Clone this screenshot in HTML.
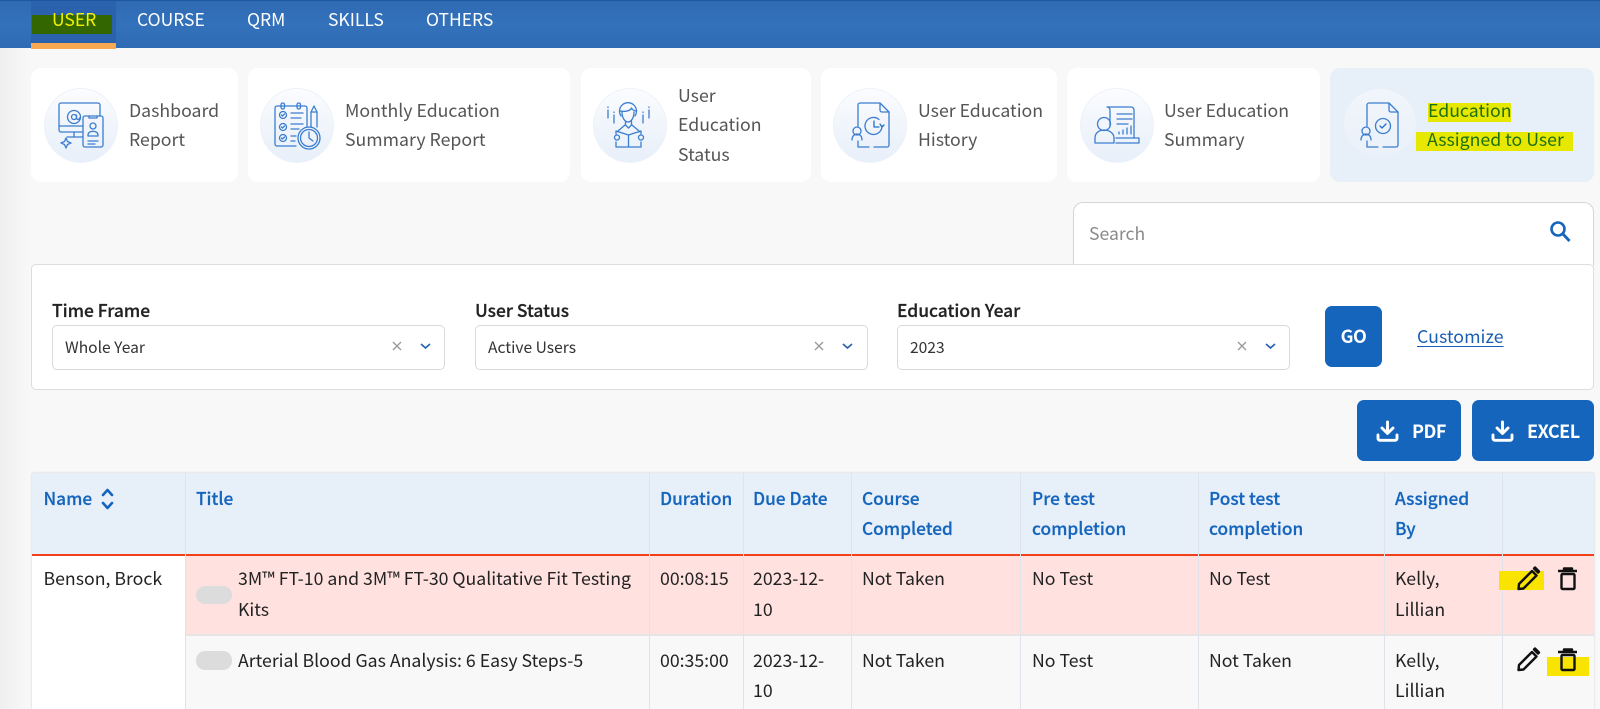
<!DOCTYPE html>
<html lang="en"><head><meta charset="utf-8"><title>Education Assigned to User</title>
<style>
*{box-sizing:border-box}
html,body{margin:0;padding:0;width:1600px;height:709px;overflow:hidden}
body{background:#f8f8f8;font-family:"Noto Sans CJK JP","Liberation Sans",sans-serif;color:#222;position:relative;font-size:17px}
.a{position:absolute}
.t{position:absolute;white-space:nowrap;line-height:30px;height:30px}
.hdr{left:0;top:0;width:1600px;height:48px;background:linear-gradient(#2f6ab3,#3372bb 50%,#2f6ab5);border-top:1px solid #1d579f}
.nav{color:#fff;font-size:17.5px;top:5px}
.card{top:68px;height:114px;background:#fff;border-radius:10px}
.circ{top:88px;width:74px;height:75px;border-radius:50%;background:linear-gradient(#fbfcfe,#e7eff9);border:1px solid #edf2f9}
.ct{color:#555;font-size:17.7px}
.lab{font-size:17.4px;font-weight:500;color:#222;-webkit-text-stroke:.25px #222}
.sel{top:325px;height:45px;background:#fff;border:1px solid #d9d9d9;border-radius:5px}
.st{top:332px;font-size:15.6px;color:#333}
.btn{background:#1565bd;border-radius:7px}
.bt{color:#fff;font-weight:700;font-size:18px;letter-spacing:-.5px}
.th{color:#1565bd;font-size:17.3px;font-weight:500;-webkit-text-stroke:.2px #1565bd}
.td{color:#222;font-size:17.7px}
.v{width:1px;background:#dfe4ea}
</style></head><body>
<div class="a" style="left:0;top:48px;width:30px;height:661px;background:linear-gradient(90deg,#efefef,#f8f8f8)"></div>

<div class="a hdr"></div>
<div class="a" style="left:31px;top:1px;width:85px;height:47px;background:#2a62ad"></div>
<div class="a" style="left:32px;top:15px;width:80px;height:19px;background:#336600"></div>
<div class="a" style="left:31px;top:43px;width:85px;height:6px;background:#f9a94f"></div>
<div class="t nav" style="left:52px;color:#f2f200">USER</div>
<div class="t nav" style="left:137px">COURSE</div>
<div class="t nav" style="left:247px">QRM</div>
<div class="t nav" style="left:328px">SKILLS</div>
<div class="t nav" style="left:426px">OTHERS</div>

<div class="a card" style="left:31px;width:207px"></div>
<div class="a card" style="left:248px;width:322px"></div>
<div class="a card" style="left:581px;width:230px"></div>
<div class="a card" style="left:821px;width:236px"></div>
<div class="a card" style="left:1067px;width:253px"></div>
<div class="a card" style="left:1330px;width:264px;background:#e7eff9"></div>
<div class="a circ" style="left:44px"></div>
<div class="a circ" style="left:260px"></div>
<div class="a circ" style="left:593px"></div>
<div class="a circ" style="left:833px"></div>
<div class="a circ" style="left:1080px"></div>
<div class="a circ" style="left:1344px;top:89px;width:72px;height:68px;background:linear-gradient(#f1f5fb,#eaf1fa);border:0"></div>

<div class="t ct" style="left:129px;top:95px">Dashboard</div>
<div class="t ct" style="left:129px;top:124px">Report</div>
<div class="t ct" style="left:345px;top:95px">Monthly Education</div>
<div class="t ct" style="left:345px;top:124px">Summary Report</div>
<div class="t ct" style="left:678px;top:80px">User</div>
<div class="t ct" style="left:678px;top:109px">Education</div>
<div class="t ct" style="left:678px;top:139px">Status</div>
<div class="t ct" style="left:918px;top:95px">User Education</div>
<div class="t ct" style="left:918px;top:124px">History</div>
<div class="t ct" style="left:1164px;top:95px">User Education</div>
<div class="t ct" style="left:1164px;top:124px">Summary</div>
<div class="a" style="left:1428px;top:103px;width:83px;height:19px;background:#e6e800"></div>
<div class="a" style="left:1416px;top:132px;width:157px;height:19px;background:#e6e800"></div>
<div class="t ct" style="left:1428px;top:95px;color:#1f6f10">Education</div>
<div class="t ct" style="left:1427px;top:124px;color:#1f6f10">Assigned to User</div>

<div class="a" style="left:1073px;top:202px;width:521px;height:64px;background:#fff;border:1px solid #d5d5d5;border-bottom:0;border-radius:10px 10px 0 0"></div>
<div class="t" style="left:1089px;top:219px;font-size:17.6px;color:#8a8a8a">Search</div>

<div class="a" style="left:31px;top:264px;width:1563px;height:126px;background:#fff;border:1px solid #ddd;border-radius:5px"></div>
<div class="t lab" style="left:52px;top:296px">Time Frame</div>
<div class="t lab" style="left:475px;top:296px">User Status</div>
<div class="t lab" style="left:897px;top:296px">Education Year</div>
<div class="a sel" style="left:52px;width:393px"></div>
<div class="a sel" style="left:475px;width:393px"></div>
<div class="a sel" style="left:897px;width:393px"></div>
<div class="t st" style="left:65px">Whole Year</div>
<div class="t st" style="left:488px">Active Users</div>
<div class="t st" style="left:910px">2023</div>

<div class="a btn" style="left:1325px;top:306px;width:57px;height:61px"></div>
<div class="t bt" style="left:1325px;top:321px;width:57px;text-align:center">GO</div>
<div class="t" style="left:1417px;top:321px;font-size:17.8px;color:#1a5fb4;text-decoration:underline;text-underline-offset:3px">Customize</div>

<div class="a btn" style="left:1357px;top:400px;width:104px;height:61px"></div>
<div class="a btn" style="left:1472px;top:400px;width:122px;height:61px"></div>
<div class="t bt" style="left:1412px;top:416px">PDF</div>
<div class="t bt" style="left:1527px;top:416px">EXCEL</div>

<div class="a" style="left:32px;top:473px;width:1562px;height:236px;background:#fff;box-shadow:0 0 2px #ccc"></div>
<div class="a" style="left:32px;top:473px;width:1562px;height:81px;background:#e7eff9"></div>
<div class="a" style="left:185px;top:555px;width:1409px;height:80px;background:#ffe2df"></div>
<div class="a" style="left:185px;top:635px;width:1409px;height:74px;background:#f8f8f8"></div>
<div class="a" style="left:185px;top:634px;width:1409px;height:2px;background:#e6e4e4"></div>
<div class="a" style="left:32px;top:554px;width:1562px;height:2px;background:#f2401a"></div>
<div class="a v" style="left:185px;top:473px;height:236px"></div>
<div class="a v" style="left:649px;top:473px;height:236px"></div>
<div class="a v" style="left:743px;top:473px;height:236px"></div>
<div class="a v" style="left:851px;top:473px;height:236px"></div>
<div class="a v" style="left:1020px;top:473px;height:236px"></div>
<div class="a v" style="left:1198px;top:473px;height:236px"></div>
<div class="a v" style="left:1384px;top:473px;height:236px"></div>
<div class="a v" style="left:1502px;top:473px;height:236px"></div>

<div class="t th" style="left:43.500px;top:483px">Name</div>
<div class="t th" style="left:196px;top:483px">Title</div>
<div class="t th" style="left:660px;top:483px">Duration</div>
<div class="t th" style="left:753px;top:483px">Due Date</div>
<div class="t th" style="left:862px;top:483px">Course</div>
<div class="t th" style="left:862px;top:513px">Completed</div>
<div class="t th" style="left:1032px;top:483px">Pre test</div>
<div class="t th" style="left:1032px;top:513px">completion</div>
<div class="t th" style="left:1209px;top:483px">Post test</div>
<div class="t th" style="left:1209px;top:513px">completion</div>
<div class="t th" style="left:1395px;top:483px">Assigned</div>
<div class="t th" style="left:1395px;top:513px">By</div>

<div class="t td" style="left:43.500px;top:563px">Benson, Brock</div>
<div class="a" style="left:196px;top:586px;width:36px;height:18px;border-radius:9px;background:#dcdcdc"></div>
<div class="a" style="left:196px;top:651px;width:36px;height:19px;border-radius:9px;background:#dcdcdc"></div>
<div class="t td" style="left:238px;top:563px">3M™ FT-10 and 3M™ FT-30 Qualitative Fit Testing</div>
<div class="t td" style="left:238px;top:594px">Kits</div>
<div class="t td" style="left:660px;top:563px">00:08:15</div>
<div class="t td" style="left:753px;top:563px">2023-12-</div>
<div class="t td" style="left:753px;top:594px">10</div>
<div class="t td" style="left:862px;top:563px">Not Taken</div>
<div class="t td" style="left:1032px;top:563px">No Test</div>
<div class="t td" style="left:1209px;top:563px">No Test</div>
<div class="t td" style="left:1395px;top:563px">Kelly,</div>
<div class="t td" style="left:1395px;top:594px">Lillian</div>
<div class="t td" style="left:238px;top:645px">Arterial Blood Gas Analysis: 6 Easy Steps-5</div>
<div class="t td" style="left:660px;top:645px">00:35:00</div>
<div class="t td" style="left:753px;top:645px">2023-12-</div>
<div class="t td" style="left:753px;top:675px">10</div>
<div class="t td" style="left:862px;top:645px">Not Taken</div>
<div class="t td" style="left:1032px;top:645px">No Test</div>
<div class="t td" style="left:1209px;top:645px">Not Taken</div>
<div class="t td" style="left:1395px;top:645px">Kelly,</div>
<div class="t td" style="left:1395px;top:675px">Lillian</div>

<div class="a" style="left:1499px;top:571px;width:45px;height:19px;background:#f9e400"></div>
<div class="a" style="left:1547px;top:657px;width:42px;height:19px;background:#f9e400"></div>

<svg class="a" style="left:0;top:0" width="1600" height="709" viewBox="0 0 1600 709" fill="none">
<g stroke="#3b7dd0" stroke-width="1.300" stroke-linecap="round" stroke-linejoin="round">
<!-- dashboard -->
<path d="M83 132H61a2 2 0 0 1-2-2V105a2 2 0 0 1 2-2h37a2 2 0 0 1 2 2v11"/>
<path d="M59 126h24M74 132v5M67 137h16"/>
<circle cx="74" cy="117" r="6.500"/><circle cx="74" cy="117" r="2.500"/><path d="M76.500 115v3a1.500 1.500 0 0 0 3 0"/>
<rect x="83" y="116" width="20" height="31" rx="2"/>
<path d="M89 116v2h8v-2M88 141h10M88 144h7"/>
<circle cx="93" cy="126" r="3"/><path d="M88 136v-1c0-5 10-5 10 0v1z"/>
<path d="M66 138l1.500 3.500L71 143l-3.500 1.500L66 148l-1.500-3.500L61 143l3.500-1.500z"/>
<!-- monthly -->
<path d="M296 146h-19a2 2 0 0 1-2-2V108a2 2 0 0 1 2-2h28a2 2 0 0 1 2 2v18"/>
<rect x="281" y="103" width="3.500" height="6" rx="1.700"/><rect x="297" y="103" width="3.500" height="6" rx="1.700"/>
<circle cx="283" cy="115" r="3.500"/><circle cx="283" cy="127" r="3.500"/><circle cx="283" cy="138" r="3.500"/>
<path d="M281.500 115l1 1 2-2M281.500 127l1 1 2-2M281.500 138l1 1 2-2M291 113h12M291 118h10M291 124h12M291 129h8M291 136h5M291 141h4"/>
<path d="M311 127v-15l3-6 3 6v15M311 112h6"/>
<circle cx="309" cy="138" r="11"/><circle cx="309" cy="138" r="8.500"/><path d="M309 132v6l4 3"/>
<!-- status -->
<path d="M621 116a8.500 8.500 0 1 1 14 0"/><path d="M620.500 111c4 1 10 0 11-3 1 2 3 3 5 3"/>
<path d="M622 112c0 6 3 10 6 10s6-4 6-10M625.500 121v4l3 3 3-3v-4"/>
<path d="M618 132v-1l7-6M639 132v-1l-7-6"/>
<path d="M616 131l12.500 4 12.500-4M628.500 135v12M616 142v5l12.500 0 12.500 0v-5M616 131v3M641 131v3"/>
<circle cx="617" cy="137.500" r="2.500"/><circle cx="641" cy="137.500" r="2.500"/>
<path d="M608 110v8M614 115v8M643 115v8M649 110v8M608 107v.5M614 112v.5M643 112v.5M649 107v.5"/>
<!-- history -->
<path d="M858 126V105a2 2 0 0 1 2-2h20l9 9v33a2 2 0 0 1-2 2h-13M869 147h-11v-6M880 103v7a2 2 0 0 0 2 2h7"/>
<path d="M882 126a8.500 8.500 0 1 1-3-6.500"/><path d="M874 121v6h5M880 124l2 3 2-2" stroke="#2470c8"/>
<circle cx="857" cy="131" r="4"/><path d="M852 140c0-8 10-8 10 0"/>
<!-- summary -->
<path d="M1110 126v-16a3 3 0 0 0-3-3h24a3 3 0 0 1 3 3v28M1107 107a3 3 0 0 1 3 3M1116 143h23v-5h-23"/>
<path d="M1117 114h15M1117 119h15M1117 124h11M1119 134v-2M1123 134v-4M1127 134v-6M1131 134v-8"/>
<circle cx="1104" cy="124" r="6.500"/><path d="M1095 143v-5c0-5 4-8 9-8s10 3 10 8v5z"/>
<!-- assigned -->
<path d="M1367 126V105a2 2 0 0 1 2-2h20l9 9v33a2 2 0 0 1-2 2h-13M1378 147h-11v-6M1389 103v7a2 2 0 0 0 2 2h7"/>
<circle cx="1383" cy="126" r="7.500"/><path d="M1380 126l2 2 4-4" stroke="#2470c8"/>
<circle cx="1366" cy="131" r="4"/><path d="M1361 140c0-8 10-8 10 0"/>
</g>
<!-- search -->
<circle cx="1558" cy="229" r="6.500" stroke="#1565bd" stroke-width="2.600"/><path d="M1563 234l6.500 7" stroke="#1565bd" stroke-width="2.800"/>
<!-- select icons -->
<g stroke="#999" stroke-width="1.300"><path d="M393 342l8 8M401 342l-8 8M815 342l8 8M823 342l-8 8M1238 342l8 8M1246 342l-8 8"/></g>
<g stroke="#2a64b0" stroke-width="1.700"><path d="M421 344l4.500 4 4.500-4M843 344l4.500 4 4.500-4M1266 344l4.500 4 4.500-4"/></g>
<!-- downloads -->
<g stroke="#fff" stroke-width="2.900" stroke-linecap="round" stroke-linejoin="round">
<path d="M1387.500 422v11M1382 428l5.500 5.500 5.500-5.500M1378 435v3.500a1.800 1.800 0 0 0 1.800 1.800h15.400a1.800 1.800 0 0 0 1.800-1.800V435"/>
<path d="M1502.500 422v11M1497 428l5.500 5.500 5.500-5.500M1493 435v3.500a1.800 1.800 0 0 0 1.800 1.800h15.400a1.800 1.800 0 0 0 1.800-1.800V435"/>
</g>
<!-- sort -->
<g stroke="#1565bd" stroke-width="2.600" stroke-linecap="round" stroke-linejoin="round"><path d="M103 495l4.500-5 4.500 5M103 503l4.500 5 4.500-5"/></g>
<!-- pencil and trash, row 1 -->
<g stroke="#111" stroke-width="2.400" stroke-linejoin="round">
<path d="M1518.500 589l.5-5 13-13 4.500 4.500-13 13z"/><path d="M1534 568.500l1-1 4 4-1 1z" fill="#111"/><path d="M1517.500 590l4-1-3-3z" fill="#111" stroke="none"/>
<path d="M1558 571h19M1564 570v-1.500h8v1.500"/><rect x="1561.500" y="574" width="13" height="15" rx="1"/>
</g>
<!-- pencil and trash, row 2 -->
<g stroke="#111" stroke-width="2.400" stroke-linejoin="round" transform="translate(0 81)">
<path d="M1518.500 589l.5-5 13-13 4.500 4.500-13 13z"/><path d="M1534 568.500l1-1 4 4-1 1z" fill="#111"/><path d="M1517.500 590l4-1-3-3z" fill="#111" stroke="none"/>
<path d="M1558 571h19M1564 570v-1.500h8v1.500"/><rect x="1561.500" y="574" width="13" height="15" rx="1"/>
</g>
</svg>
</body></html>
